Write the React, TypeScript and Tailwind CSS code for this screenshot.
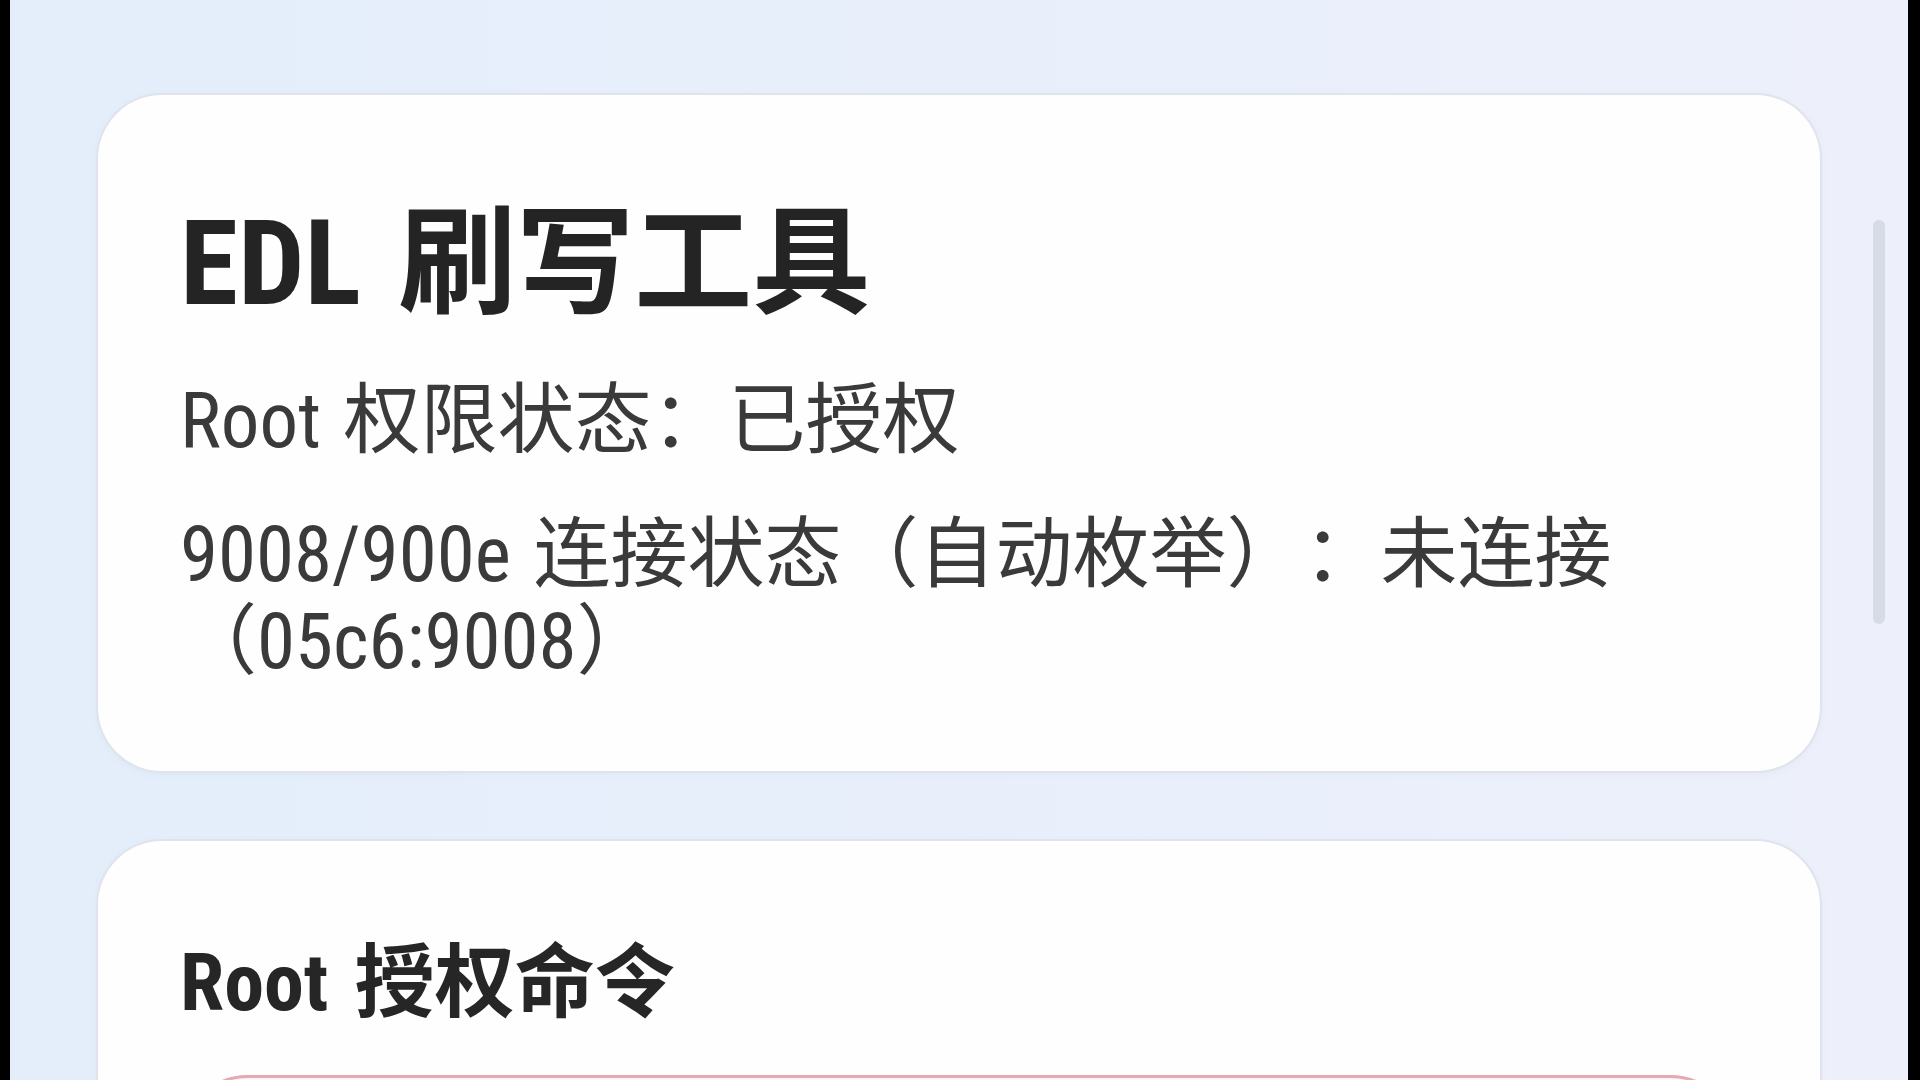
import React from 'react';

const statusLines: string[] = [
  'Root 权限状态：已授权',
  '9008/900e 连接状态（自动枚举）：未连接（05c6:9008）',
];

function App() {
  return (
    <div className="flex h-screen w-full overflow-hidden bg-black font-['Roboto_Condensed',Roboto,'Noto_Sans_CJK_SC',sans-serif] font-stretch-[87%] [text-spacing-trim:space-all]">
      <div className="w-[10px] shrink-0 bg-black" />

      <main className="relative flex-1 overflow-hidden bg-gradient-to-r from-[#e3eefa] via-[#e8effb] to-[#edf0fb] px-[88px] pt-[95px]">
        {/* scroll indicator */}
        <div className="absolute left-[1863px] top-[220px] h-[404px] w-[12px] rounded-full bg-[#d7dbe6]" />

        <section className="rounded-[64px] bg-[#fefefe] px-[82px] pt-[110px] pb-[85px] ring-2 ring-[#dfe4ec] shadow-[0_2px_8px_rgba(120,130,150,0.08)]">
          <h1 className="text-[118px] font-bold leading-[118px] text-[#242424] mb-[55px] [word-spacing:10px]">EDL 刷写工具</h1>
          <div className="flex flex-col gap-[47px]">
            {statusLines.map((line) => (
              <p key={line} className="text-[77px] leading-[87px] font-normal text-[#3a3a3a] [word-spacing:5px]">
                {line}
              </p>
            ))}
          </div>
        </section>

        <section className="mt-[70px] rounded-[64px] bg-[#fefefe] px-[82px] pt-[102px] pb-[60px] ring-2 ring-[#dfe4ec] shadow-[0_2px_8px_rgba(120,130,150,0.08)]">
          <h2 className="text-[80px] font-bold leading-[80px] text-[#262626] mb-[52px] [word-spacing:8px]">Root 授权命令</h2>
          <div className="h-[180px] rounded-[68px] border-[3px] border-[#e2aab2] bg-[#fff6f7]" />
        </section>
      </main>

      <div className="w-[12px] shrink-0 bg-black" />
    </div>
  );
}

export default App;
